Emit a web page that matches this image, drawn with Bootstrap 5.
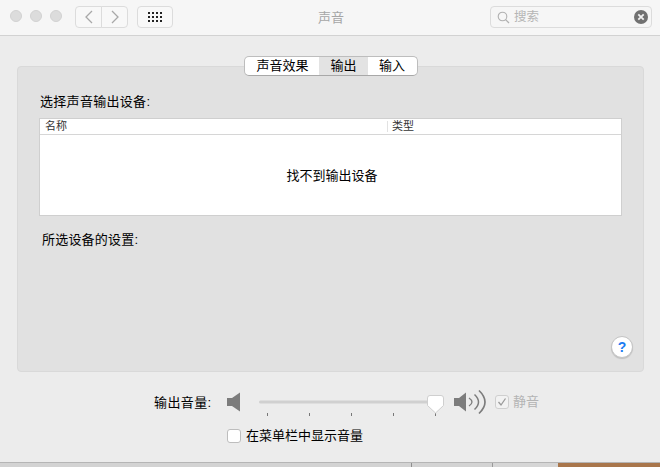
<!DOCTYPE html>
<html lang="zh">
<head>
<meta charset="utf-8">
<link rel="stylesheet" href="https://cdn.jsdelivr.net/npm/bootstrap@5.3.0/dist/css/bootstrap.min.css">
<style>
html,body{height:467px;overflow:hidden}
body{background:#ececec;font-family:"Liberation Sans","Noto Sans CJK SC",sans-serif;font-size:13px;color:#000;line-height:16px}
.winbar{height:36px;background:#f6f6f6;border-bottom:1px solid #d2d2d2;padding:6px 8px 0 10px;color:#aaa}
.light{width:12px;height:12px;border-radius:50%;background:#dcdcdc;border:1px solid #d2d2d2}
.lights{gap:8px;margin-right:13px}
.tbtn{height:22px;border:1px solid #dcdcdc;border-radius:4px;background:#f8f8f8}
.tback{width:27px;border-radius:4px 0 0 4px}
.tfwd{width:27px;margin-left:-1px;border-radius:0 4px 4px 0}
.tgrid{width:36px;margin-left:9px}
.wintitle{width:0;flex:1 1 0;text-align:center;font-size:13px;color:#a6a6a6;padding-right:1px}
.searchbox{width:162px;height:22px;border:1px solid #dcdcdc;border-radius:4px;background:#f6f6f6;padding:0 3px 0 6px;color:#b5b5b5;font-size:12.5px;gap:4px}
.clearbtn{margin-left:auto}
.panelwrap{height:426px;padding:30px 16px 0 17px}
.pane{height:306px;background:#e1e1e1;border:1px solid #d9d9d9;border-radius:4px;padding:0 21px}
.segs{width:174px;height:20px;margin:-11px auto 0;background:#fff;border-radius:5px;border:1px solid #bdbdbd;border-bottom-color:#a8a8a8;overflow:hidden}
.seg{height:18px;line-height:18px;text-align:center;font-size:13px}
.seg1{width:74px;padding-left:2px}.seg2{width:49px;background:#e3e3e3;padding-left:1px}.seg3{width:49px}
.ptitle{margin-top:18px;margin-bottom:8px;margin-left:1px;letter-spacing:.3px;height:16px}
.devlist{height:98px;background:#fff;border:1px solid #cfcfcf}
.devhead{height:16px;border-bottom:1px solid #d6d6d6;font-size:11px;line-height:15px;color:#333}
.hname{width:347px;padding-left:5px}
.htype{padding-left:4px;border-left:1px solid #e2e2e2;height:11px;line-height:11px;margin-top:2px}
.devempty{height:80px;font-size:13px;padding-left:3px;padding-top:1px}
.ptitle2{margin-top:16px;margin-left:3px;letter-spacing:.2px}
.helpwrap{height:110px;margin-right:-11px}
.helpbtn{width:22px;height:22px;border-radius:50%;background:#fff;border:1px solid #c4c4c4;box-shadow:0 1px 1px rgba(0,0,0,.15);color:#1c7cf2;font-weight:700;font-size:14px;line-height:20px;text-align:center}
.volrow{height:38px;margin-top:11px;padding-left:137px}
.vollabel{width:73px;letter-spacing:.4px;margin-top:2px}
.slider{margin:0 9px 0 18px}
.mutebox{width:14px;height:14px;border:1px solid #cfcfcf;border-radius:3px;background:#f2f2f2}
.mutelabel{color:#b4b4b4;margin-left:4px}
.muterow{margin-left:9px}
.menurow{padding-left:210px;margin-top:7px}
.mbox{width:14px;height:14px;background:#fff;border:1px solid #bdbdbd;border-radius:3px;margin-right:5px}
.strip{display:flex;height:5px;border-top:1px solid #b5b5b5}
.strip1{width:411px;background:#d3d3d3}.strip2{width:1px;background:#8f8f8f}.strip3{width:80px;background:#d3d3d3}.strip4{width:66px;background:#d6d6d6;border-left:1px solid #9a9a9a}.strip5{flex:1;background:#a9764b}
.canvasclip{height:462px;overflow:hidden}
</style>
</head>
<body>
<div class="canvasclip">
<div class="winbar d-flex align-items-start">
  <div class="lights d-flex mt-1"><span class="light"></span><span class="light"></span><span class="light"></span></div>
  <div class="tbtn tback d-flex align-items-center justify-content-center"><svg width="10" height="14" viewBox="0 0 10 14"><path d="M8 1 2 7l6 6" fill="none" stroke="#a8a8a8" stroke-width="1.3"/></svg></div>
  <div class="tbtn tfwd d-flex align-items-center justify-content-center"><svg width="10" height="14" viewBox="0 0 10 14"><path d="m2 1 6 6-6 6" fill="none" stroke="#a8a8a8" stroke-width="1.3"/></svg></div>
  <div class="tbtn tgrid d-flex align-items-center justify-content-center"><svg width="15" height="11" viewBox="0 0 15 11" fill="#222"><path d="M0 0h2v2H0zM4 0h2v2H4zM8 0h2v2H8zM12 0h2v2h-2zM0 4h2v2H0zM4 4h2v2H4zM8 4h2v2H8zM12 4h2v2h-2zM0 8h2v2H0zM4 8h2v2H4zM8 8h2v2H8zM12 8h2v2h-2z"/></svg></div>
  <div class="wintitle mt-1">声音</div>
  <div class="searchbox d-flex align-items-center">
    <svg width="13" height="13" viewBox="0 0 13 13"><circle cx="5.5" cy="5.5" r="4.3" fill="none" stroke="#b0b0b0" stroke-width="1.1"/><path d="m8.6 8.6 3.4 3.4" stroke="#b0b0b0" stroke-width="1.3"/></svg>
    <span>搜索</span>
    <svg class="clearbtn" width="14" height="14" viewBox="0 0 14 14"><circle cx="7" cy="7" r="7" fill="#717171"/><path d="m4.3 4.3 5.4 5.4M9.7 4.3l-5.4 5.4" stroke="#f2f2f2" stroke-width="1.8"/></svg>
  </div>
</div>
<div class="panelwrap">
  <div class="pane">
    <div class="segs d-flex">
      <div class="seg seg1">声音效果</div><div class="seg seg2">输出</div><div class="seg seg3">输入</div>
    </div>
    <div class="ptitle">选择声音输出设备:</div>
    <div class="devlist">
      <div class="devhead d-flex"><div class="hname">名称</div><div class="htype">类型</div></div>
      <div class="devempty d-flex align-items-center justify-content-center">找不到输出设备</div>
    </div>
    <div class="ptitle2">所选设备的设置:</div>
    <div class="helpwrap d-flex justify-content-end align-items-end"><div class="helpbtn">?</div></div>
  </div>
  <div class="volrow d-flex align-items-center">
    <div class="vollabel">输出音量:</div>
    <svg width="14" height="20" viewBox="0 0 14 20"><path d="M0 6h5l8-5.500v19l-8-5.500H0z" fill="#7c7c7c"/></svg>
    <svg class="slider" width="186" height="28" viewBox="0 0 186 28"><rect x="0" y="12.500" width="176" height="3" rx="1.500" fill="#d0d0d0"/><g fill="#777"><rect x="8" y="25" width="1" height="3"/><rect x="50" y="25" width="1" height="3"/><rect x="92" y="25" width="1" height="3"/><rect x="134" y="25" width="1" height="3"/><rect x="176" y="25" width="1" height="3"/></g><path d="M168.500 10a2.500 2.500 0 0 1 2.500-2.500h11a2.500 2.500 0 0 1 2.500 2.500v7.500l-8 7.500-8-7.500z" fill="#fff" stroke="#cfcfcf"/></svg>
    <svg width="32" height="26" viewBox="0 0 32 26"><path d="M0 9h5l7-5.500v19L5 17H0z" fill="#7c7c7c"/><g fill="none" stroke="#7c7c7c"><path d="M15 9q6 4 0 8" stroke-width="1.300"/><path d="M20.500 5.500q8 7.500 0 15" stroke-width="1.500"/><path d="M25 1.500q12 11.500 0 23" stroke-width="1.700"/></g></svg>
    <div class="muterow d-flex align-items-center"><div class="mutebox d-flex align-items-center justify-content-center"><svg width="10" height="10" viewBox="0 0 10 10"><path d="m1.500 5 2.500 3 4.500-6.500" fill="none" stroke="#9a9a9a" stroke-width="1.300"/></svg></div><span class="mutelabel">静音</span></div>
  </div>
  <div class="menurow d-flex align-items-center"><div class="mbox"></div><span>在菜单栏中显示音量</span></div>
</div>
</div>
<div class="strip"><div class="strip1"></div><div class="strip2"></div><div class="strip3"></div><div class="strip4"></div><div class="strip5"></div></div>
<script src="https://cdn.jsdelivr.net/npm/bootstrap@5.3.0/dist/js/bootstrap.bundle.min.js"></script>
</body>
</html>
